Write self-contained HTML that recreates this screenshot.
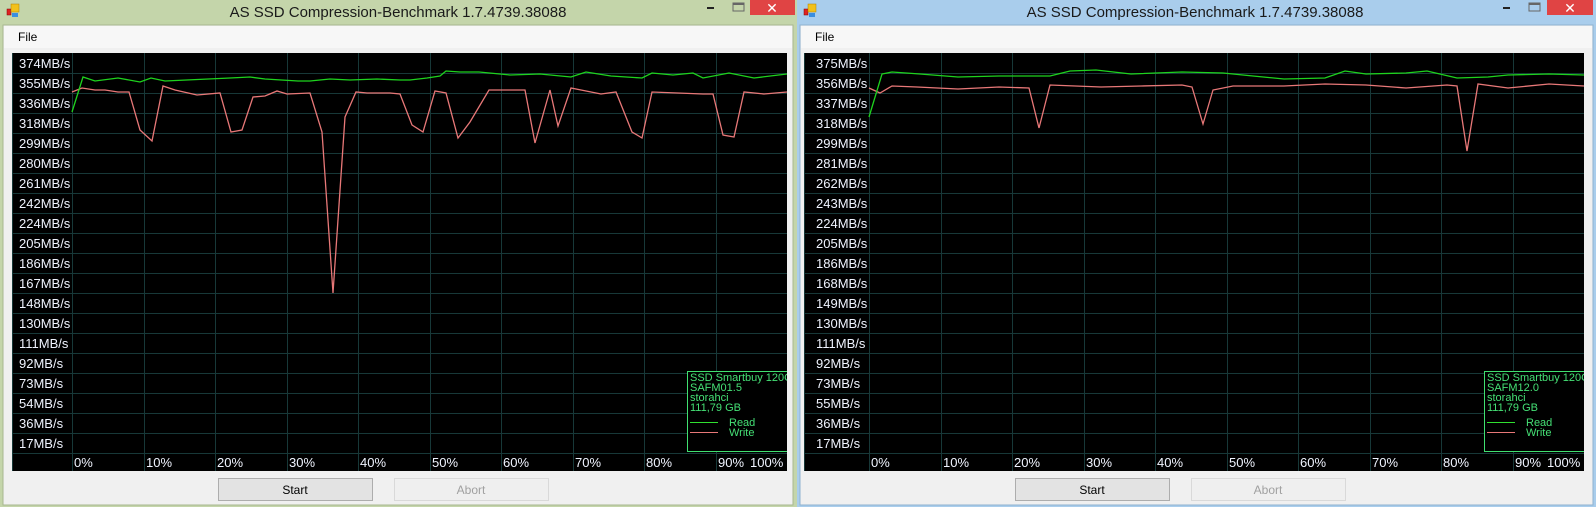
<!DOCTYPE html>
<html><head><meta charset="utf-8"><style>
html,body{margin:0;padding:0;width:1596px;height:507px;overflow:hidden;background:#fff;font-family:"Liberation Sans",sans-serif}
svg text{font-family:"Liberation Sans",sans-serif}
</style></head><body>
<svg width="1596" height="507" viewBox="0 0 1596 507" xmlns="http://www.w3.org/2000/svg" style="position:absolute;left:0;top:0">
<defs>
<clipPath id="cl"><rect x="12" y="53" width="775" height="418"/></clipPath>
<clipPath id="cr"><rect x="804" y="53" width="780" height="418"/></clipPath>
</defs>
<!-- LEFT WINDOW -->
<rect x="0" y="0" width="797" height="507" fill="#c4d5aa"/>
<rect x="3" y="25" width="790" height="480" fill="#f0f0f0" stroke="#a8b890"/>
<rect x="4" y="26" width="788" height="22" fill="#f7f7f7"/>
<g transform="translate(6,4)"><rect x="1" y="5" width="4" height="6" fill="#d22" stroke="#800" stroke-width=".5"/><rect x="5" y="0" width="8" height="8" fill="#f2c11a" stroke="#b08000" stroke-width=".5"/><rect x="6" y="9" width="6" height="4" fill="#3a8ee0"/></g>
<text x="398" y="17" font-size="15" fill="#1a1a1a" text-anchor="middle">AS SSD Compression-Benchmark 1.7.4739.38088</text>
<rect x="707" y="7" width="7" height="2" fill="#222"/>
<rect x="733" y="3" width="11" height="8" fill="none" stroke="#666" stroke-width="1"/><rect x="733" y="3" width="11" height="2" fill="#666"/>
<rect x="750" y="0" width="45" height="15" fill="#e04444"/>
<text x="772" y="13" font-size="14" fill="#fff" text-anchor="middle">✕</text>
<text x="18" y="41" font-size="12" fill="#000">File</text>
<rect x="12" y="53" width="775" height="418" fill="#000"/>
<g stroke="#173838" stroke-width="1">
<path d="M12 73.5H787M12 93.5H787M12 113.5H787M12 133.5H787M12 153.5H787M12 173.5H787M12 193.5H787M12 213.5H787M12 233.5H787M12 253.5H787M12 273.5H787M12 293.5H787M12 313.5H787M12 333.5H787M12 353.5H787M12 373.5H787M12 393.5H787M12 413.5H787M12 433.5H787M12 453.5H787"/>
<path d="M12.5 53V471M72.5 53V471M144.5 53V471M215.5 53V471M287.5 53V471M358.5 53V471M430.5 53V471M501.5 53V471M573.5 53V471M644.5 53V471M716.5 53V471"/>
</g>
<g font-size="13" fill="#f0f4ff">
<text x="19" y="68">374MB/s</text><text x="19" y="88">355MB/s</text><text x="19" y="108">336MB/s</text><text x="19" y="128">318MB/s</text><text x="19" y="148">299MB/s</text><text x="19" y="168">280MB/s</text><text x="19" y="188">261MB/s</text><text x="19" y="208">242MB/s</text><text x="19" y="228">224MB/s</text><text x="19" y="248">205MB/s</text><text x="19" y="268">186MB/s</text><text x="19" y="288">167MB/s</text><text x="19" y="308">148MB/s</text><text x="19" y="328">130MB/s</text><text x="19" y="348">111MB/s</text><text x="19" y="368">92MB/s</text><text x="19" y="388">73MB/s</text><text x="19" y="408">54MB/s</text><text x="19" y="428">36MB/s</text><text x="19" y="448">17MB/s</text>
<text x="74" y="467">0%</text><text x="146" y="467">10%</text><text x="217" y="467">20%</text><text x="289" y="467">30%</text><text x="360" y="467">40%</text><text x="432" y="467">50%</text><text x="503" y="467">60%</text><text x="575" y="467">70%</text><text x="646" y="467">80%</text><text x="718" y="467">90%</text><text x="750" y="467">100%</text>
</g>
<g clip-path="url(#cl)" fill="none" stroke-width="1.3">
<polyline stroke="#e87878" points="72,92 82,88 95,90 105,90 118,92 129,92 140,130 152,141 163,86 175,90 197,95 220,93 231,132 242,130 253,97 265,96 277,91 287,94 310,93 322,132 333,293 345,117 356,92 367,93 390,93 400,94 412,125 423,132 435,91 446,93 458,138 470,122 489,90 525,90 535,143 550,90 558,126 571,88 601,94 616,92 632,132 642,138 652,92 703,94 713,94 723,135 734,137 744,92 764,94 787,92"/>
<polyline stroke="#1ed21e" points="72,112 83,77 95,81 118,78 140,82 151,78 165,81 230,78 250,77 265,79 298,81 310,81 330,79 350,80 377,79 400,80 410,80 427,78 440,76 446,71 460,72 479,72 510,75 540,74 571,77 586,72 611,76 642,78 652,73 673,75 693,73 703,78 729,73 754,78 787,74"/>
<rect x="687.5" y="371.5" width="110" height="80" stroke="#40e070" stroke-width="1" fill="#000"/>
</g>
<g font-size="11" fill="#45e075" clip-path="url(#cl)">
<text x="690" y="381">SSD Smartbuy 120GB</text><text x="690" y="391">SAFM01.5</text><text x="690" y="401">storahci</text><text x="690" y="411">111,79 GB</text>
<text x="729" y="426">Read</text><text x="729" y="436">Write</text>
</g>
<path d="M690 422.5H718" stroke="#30e030"/><path d="M690 432.5H718" stroke="#e87878"/>
<rect x="218.5" y="478.5" width="154" height="22" fill="#e3e3e3" stroke="#adadad"/>
<text x="295" y="494" font-size="12" fill="#000" text-anchor="middle">Start</text>
<rect x="394.5" y="478.5" width="154" height="22" fill="#efefef" stroke="#d9d9d9"/>
<text x="471" y="494" font-size="12" fill="#a0a0a0" text-anchor="middle">Abort</text>

<!-- RIGHT WINDOW -->
<rect x="797" y="0" width="799" height="507" fill="#a9cdec"/>
<rect x="800" y="25" width="793" height="480" fill="#f0f0f0" stroke="#8fb2d0"/>
<rect x="801" y="26" width="791" height="22" fill="#f7f7f7"/>
<g transform="translate(803,4)"><rect x="1" y="5" width="4" height="6" fill="#d22" stroke="#800" stroke-width=".5"/><rect x="5" y="0" width="8" height="8" fill="#f2c11a" stroke="#b08000" stroke-width=".5"/><rect x="6" y="9" width="6" height="4" fill="#3a8ee0"/></g>
<text x="1195" y="17" font-size="15" fill="#1a1a1a" text-anchor="middle">AS SSD Compression-Benchmark 1.7.4739.38088</text>
<rect x="1503" y="7" width="7" height="2" fill="#222"/>
<rect x="1529" y="3" width="11" height="8" fill="none" stroke="#666" stroke-width="1"/><rect x="1529" y="3" width="11" height="2" fill="#666"/>
<rect x="1547" y="0" width="46" height="15" fill="#e04444"/>
<text x="1570" y="13" font-size="14" fill="#fff" text-anchor="middle">✕</text>
<text x="815" y="41" font-size="12" fill="#000">File</text>
<rect x="804" y="53" width="780" height="418" fill="#000"/>
<g stroke="#173838" stroke-width="1">
<path d="M804 73.5H1584M804 93.5H1584M804 113.5H1584M804 133.5H1584M804 153.5H1584M804 173.5H1584M804 193.5H1584M804 213.5H1584M804 233.5H1584M804 253.5H1584M804 273.5H1584M804 293.5H1584M804 313.5H1584M804 333.5H1584M804 353.5H1584M804 373.5H1584M804 393.5H1584M804 413.5H1584M804 433.5H1584M804 453.5H1584"/>
<path d="M804.5 53V471M869.5 53V471M941.5 53V471M1012.5 53V471M1084.5 53V471M1155.5 53V471M1227.5 53V471M1298.5 53V471M1370.5 53V471M1441.5 53V471M1513.5 53V471"/>
</g>
<g font-size="13" fill="#f0f4ff">
<text x="816" y="68">375MB/s</text><text x="816" y="88">356MB/s</text><text x="816" y="108">337MB/s</text><text x="816" y="128">318MB/s</text><text x="816" y="148">299MB/s</text><text x="816" y="168">281MB/s</text><text x="816" y="188">262MB/s</text><text x="816" y="208">243MB/s</text><text x="816" y="228">224MB/s</text><text x="816" y="248">205MB/s</text><text x="816" y="268">186MB/s</text><text x="816" y="288">168MB/s</text><text x="816" y="308">149MB/s</text><text x="816" y="328">130MB/s</text><text x="816" y="348">111MB/s</text><text x="816" y="368">92MB/s</text><text x="816" y="388">73MB/s</text><text x="816" y="408">55MB/s</text><text x="816" y="428">36MB/s</text><text x="816" y="448">17MB/s</text>
<text x="871" y="467">0%</text><text x="943" y="467">10%</text><text x="1014" y="467">20%</text><text x="1086" y="467">30%</text><text x="1157" y="467">40%</text><text x="1229" y="467">50%</text><text x="1300" y="467">60%</text><text x="1372" y="467">70%</text><text x="1443" y="467">80%</text><text x="1515" y="467">90%</text><text x="1547" y="467">100%</text>
</g>
<g clip-path="url(#cr)" fill="none" stroke-width="1.3">
<polyline stroke="#e87878" points="869,88 880,93 892,86 917,87 958,89 999,87 1029,88 1039,128 1050,85 1101,87 1141,86 1182,85 1192,87 1203,124 1213,90 1233,86 1284,86 1325,84 1366,85 1406,88 1447,85 1457,86 1467,151 1478,84 1508,88 1549,84 1584,86"/>
<polyline stroke="#1ed21e" points="869,117 882,74 892,72 920,74 958,77 999,76 1050,76 1070,71 1096,70 1131,74 1182,72 1223,73 1253,76 1284,79 1325,78 1345,71 1366,74 1406,73 1427,71 1457,78 1488,77 1508,75 1549,74 1584,75"/>
<rect x="1484.5" y="371.5" width="110" height="80" stroke="#40e070" stroke-width="1" fill="#000"/>
</g>
<g font-size="11" fill="#45e075" clip-path="url(#cr)">
<text x="1487" y="381">SSD Smartbuy 120GB</text><text x="1487" y="391">SAFM12.0</text><text x="1487" y="401">storahci</text><text x="1487" y="411">111,79 GB</text>
<text x="1526" y="426">Read</text><text x="1526" y="436">Write</text>
</g>
<path d="M1487 422.5H1515" stroke="#30e030"/><path d="M1487 432.5H1515" stroke="#e87878"/>
<rect x="1015.5" y="478.5" width="154" height="22" fill="#e3e3e3" stroke="#adadad"/>
<text x="1092" y="494" font-size="12" fill="#000" text-anchor="middle">Start</text>
<rect x="1191.5" y="478.5" width="154" height="22" fill="#efefef" stroke="#d9d9d9"/>
<text x="1268" y="494" font-size="12" fill="#a0a0a0" text-anchor="middle">Abort</text>
</svg>
</body></html>
